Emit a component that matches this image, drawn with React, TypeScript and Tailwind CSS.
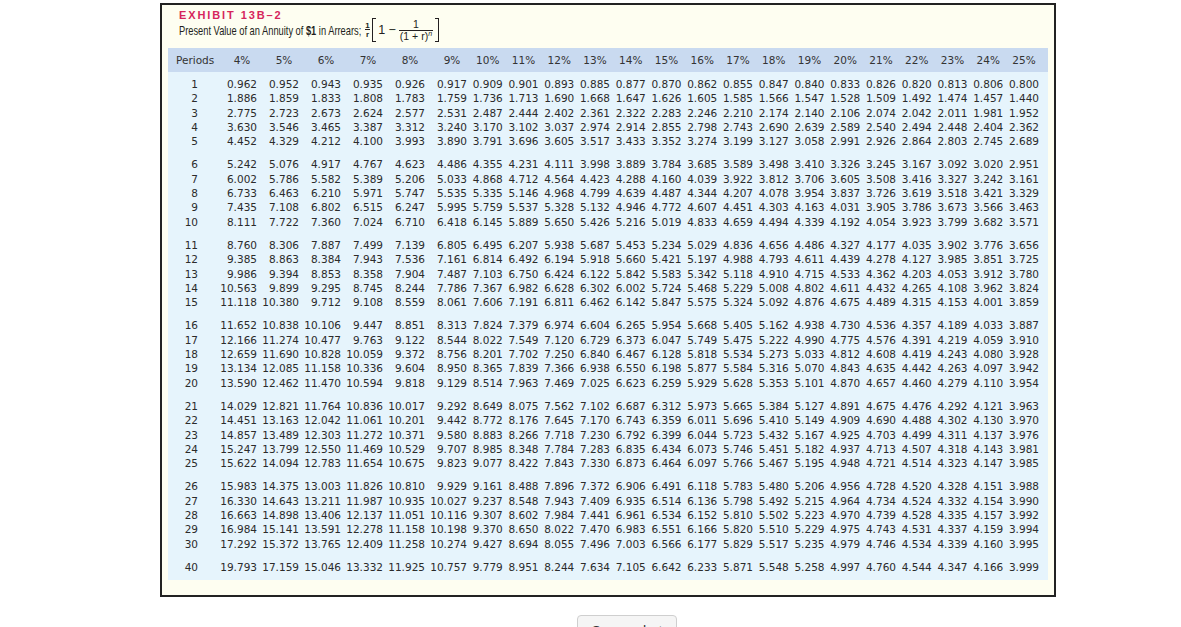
import React from "react";

const DATA = `1 0.962 0.952 0.943 0.935 0.926 0.917 0.909 0.901 0.893 0.885 0.877 0.870 0.862 0.855 0.847 0.840 0.833 0.826 0.820 0.813 0.806 0.800
2 1.886 1.859 1.833 1.808 1.783 1.759 1.736 1.713 1.690 1.668 1.647 1.626 1.605 1.585 1.566 1.547 1.528 1.509 1.492 1.474 1.457 1.440
3 2.775 2.723 2.673 2.624 2.577 2.531 2.487 2.444 2.402 2.361 2.322 2.283 2.246 2.210 2.174 2.140 2.106 2.074 2.042 2.011 1.981 1.952
4 3.630 3.546 3.465 3.387 3.312 3.240 3.170 3.102 3.037 2.974 2.914 2.855 2.798 2.743 2.690 2.639 2.589 2.540 2.494 2.448 2.404 2.362
5 4.452 4.329 4.212 4.100 3.993 3.890 3.791 3.696 3.605 3.517 3.433 3.352 3.274 3.199 3.127 3.058 2.991 2.926 2.864 2.803 2.745 2.689
6 5.242 5.076 4.917 4.767 4.623 4.486 4.355 4.231 4.111 3.998 3.889 3.784 3.685 3.589 3.498 3.410 3.326 3.245 3.167 3.092 3.020 2.951
7 6.002 5.786 5.582 5.389 5.206 5.033 4.868 4.712 4.564 4.423 4.288 4.160 4.039 3.922 3.812 3.706 3.605 3.508 3.416 3.327 3.242 3.161
8 6.733 6.463 6.210 5.971 5.747 5.535 5.335 5.146 4.968 4.799 4.639 4.487 4.344 4.207 4.078 3.954 3.837 3.726 3.619 3.518 3.421 3.329
9 7.435 7.108 6.802 6.515 6.247 5.995 5.759 5.537 5.328 5.132 4.946 4.772 4.607 4.451 4.303 4.163 4.031 3.905 3.786 3.673 3.566 3.463
10 8.111 7.722 7.360 7.024 6.710 6.418 6.145 5.889 5.650 5.426 5.216 5.019 4.833 4.659 4.494 4.339 4.192 4.054 3.923 3.799 3.682 3.571
11 8.760 8.306 7.887 7.499 7.139 6.805 6.495 6.207 5.938 5.687 5.453 5.234 5.029 4.836 4.656 4.486 4.327 4.177 4.035 3.902 3.776 3.656
12 9.385 8.863 8.384 7.943 7.536 7.161 6.814 6.492 6.194 5.918 5.660 5.421 5.197 4.988 4.793 4.611 4.439 4.278 4.127 3.985 3.851 3.725
13 9.986 9.394 8.853 8.358 7.904 7.487 7.103 6.750 6.424 6.122 5.842 5.583 5.342 5.118 4.910 4.715 4.533 4.362 4.203 4.053 3.912 3.780
14 10.563 9.899 9.295 8.745 8.244 7.786 7.367 6.982 6.628 6.302 6.002 5.724 5.468 5.229 5.008 4.802 4.611 4.432 4.265 4.108 3.962 3.824
15 11.118 10.380 9.712 9.108 8.559 8.061 7.606 7.191 6.811 6.462 6.142 5.847 5.575 5.324 5.092 4.876 4.675 4.489 4.315 4.153 4.001 3.859
16 11.652 10.838 10.106 9.447 8.851 8.313 7.824 7.379 6.974 6.604 6.265 5.954 5.668 5.405 5.162 4.938 4.730 4.536 4.357 4.189 4.033 3.887
17 12.166 11.274 10.477 9.763 9.122 8.544 8.022 7.549 7.120 6.729 6.373 6.047 5.749 5.475 5.222 4.990 4.775 4.576 4.391 4.219 4.059 3.910
18 12.659 11.690 10.828 10.059 9.372 8.756 8.201 7.702 7.250 6.840 6.467 6.128 5.818 5.534 5.273 5.033 4.812 4.608 4.419 4.243 4.080 3.928
19 13.134 12.085 11.158 10.336 9.604 8.950 8.365 7.839 7.366 6.938 6.550 6.198 5.877 5.584 5.316 5.070 4.843 4.635 4.442 4.263 4.097 3.942
20 13.590 12.462 11.470 10.594 9.818 9.129 8.514 7.963 7.469 7.025 6.623 6.259 5.929 5.628 5.353 5.101 4.870 4.657 4.460 4.279 4.110 3.954
21 14.029 12.821 11.764 10.836 10.017 9.292 8.649 8.075 7.562 7.102 6.687 6.312 5.973 5.665 5.384 5.127 4.891 4.675 4.476 4.292 4.121 3.963
22 14.451 13.163 12.042 11.061 10.201 9.442 8.772 8.176 7.645 7.170 6.743 6.359 6.011 5.696 5.410 5.149 4.909 4.690 4.488 4.302 4.130 3.970
23 14.857 13.489 12.303 11.272 10.371 9.580 8.883 8.266 7.718 7.230 6.792 6.399 6.044 5.723 5.432 5.167 4.925 4.703 4.499 4.311 4.137 3.976
24 15.247 13.799 12.550 11.469 10.529 9.707 8.985 8.348 7.784 7.283 6.835 6.434 6.073 5.746 5.451 5.182 4.937 4.713 4.507 4.318 4.143 3.981
25 15.622 14.094 12.783 11.654 10.675 9.823 9.077 8.422 7.843 7.330 6.873 6.464 6.097 5.766 5.467 5.195 4.948 4.721 4.514 4.323 4.147 3.985
26 15.983 14.375 13.003 11.826 10.810 9.929 9.161 8.488 7.896 7.372 6.906 6.491 6.118 5.783 5.480 5.206 4.956 4.728 4.520 4.328 4.151 3.988
27 16.330 14.643 13.211 11.987 10.935 10.027 9.237 8.548 7.943 7.409 6.935 6.514 6.136 5.798 5.492 5.215 4.964 4.734 4.524 4.332 4.154 3.990
28 16.663 14.898 13.406 12.137 11.051 10.116 9.307 8.602 7.984 7.441 6.961 6.534 6.152 5.810 5.502 5.223 4.970 4.739 4.528 4.335 4.157 3.992
29 16.984 15.141 13.591 12.278 11.158 10.198 9.370 8.650 8.022 7.470 6.983 6.551 6.166 5.820 5.510 5.229 4.975 4.743 4.531 4.337 4.159 3.994
30 17.292 15.372 13.765 12.409 11.258 10.274 9.427 8.694 8.055 7.496 7.003 6.566 6.177 5.829 5.517 5.235 4.979 4.746 4.534 4.339 4.160 3.995
40 19.793 17.159 15.046 13.332 11.925 10.757 9.779 8.951 8.244 7.634 7.105 6.642 6.233 5.871 5.548 5.258 4.997 4.760 4.544 4.347 4.166 3.999`;

const ROWS = DATA.split("\n").map((l) => l.trim().split(" "));
const GROUPS: string[][][] = [];
for (let i = 0; i < ROWS.length; i += 5) GROUPS.push(ROWS.slice(i, i + 5));

const RATES = [4, 5, 6, 7, 8, 9, 10, 11, 12, 13, 14, 15, 16, 17, 18, 19, 20, 21, 22, 23, 24, 25];

const GRID = "grid grid-cols-[30px_59px_repeat(5,42px)_repeat(16,35.75px)]";

export default function App() {
  return (
    <div className="min-h-screen bg-white pt-[3px] font-['DejaVu_Sans',sans-serif] text-[#2b2b2b]">
      <div className="ml-[160px] h-[594px] w-[896px] border-2 border-[#222] bg-[#fefef1]">
        {/* Title */}
        <div className="pl-[17px] pt-[5px]">
          <div className="font-['Liberation_Sans',Arial,sans-serif] text-[11px] font-bold leading-[11px] tracking-[1.9px] text-[#d6265c]">
            EXHIBIT 13B–2
          </div>
          <div className="-mt-[3px] flex h-[24px] items-center font-['Liberation_Sans',Arial,sans-serif] text-[#231f20]">
            <span className="inline-block w-[186px] overflow-visible">
              <span className="inline-block origin-left scale-x-[0.715] whitespace-nowrap text-[13px] leading-[14px]">
                Present Value of an Annuity of <b>$1</b> in Arrears;
              </span>
            </span>
            <span className="inline-flex flex-col items-center text-[8px] font-bold leading-[7px]">
              <span>1</span>
              <span className="border-t border-[#231f20] px-[1px] pt-[1px]">r</span>
            </span>
            <span className="ml-[2px] h-[24px] w-[4px] border-y border-l-[1.5px] border-[#231f20]" />
            <span className="ml-[2px] text-[12.5px] leading-[13px]">1 −</span>
            <span className="ml-[3px] inline-flex flex-col items-center text-[10.5px]">
              <span className="leading-[11px]">1</span>
              <span className="border-t border-[#231f20] px-[1px] leading-[11px]">
                (1 + r)<sup className="text-[7px] italic">n</sup>
              </span>
            </span>
            <span className="ml-[2px] h-[24px] w-[4px] border-y border-r-[1.5px] border-[#231f20]" />
          </div>
        </div>

        {/* Table */}
        <div className="mx-[6px] mt-[6px] text-[10.5px]">
          <div className={`${GRID} h-[24px] items-center bg-[#c9daf0] leading-[24px] text-[#333]`}>
            <div className="whitespace-nowrap pl-[8px]">Periods</div>
            {RATES.map((r) => (
              <div key={r} className="flex justify-end">
                <span className="w-[30px] whitespace-nowrap text-center">{r}%</span>
              </div>
            ))}
          </div>
          <div className="bg-[#e6f4fc] pb-[6px] pt-[5px]">
            {GROUPS.map((g, gi) => (
              <div key={gi} className={gi === 0 ? "" : "mt-[9px]"}>
                {g.map((row) => (
                  <div key={row[0]} className={`${GRID} h-[14.3px] leading-[14.3px]`}>
                    {row.map((v, i) => (
                      <div key={i} className="whitespace-nowrap text-right">
                        {v}
                      </div>
                    ))}
                  </div>
                ))}
              </div>
            ))}
          </div>
        </div>
      </div>

      <div className="ml-[577px] mt-[18px]">
        <button className="w-[100px] rounded-[4px] border border-[#cfcfcf] bg-[#f5f5f5] py-[5px] text-center font-['Liberation_Sans',Arial,sans-serif] text-[14px] text-[#333]">
          Screenshot
        </button>
      </div>
    </div>
  );
}
